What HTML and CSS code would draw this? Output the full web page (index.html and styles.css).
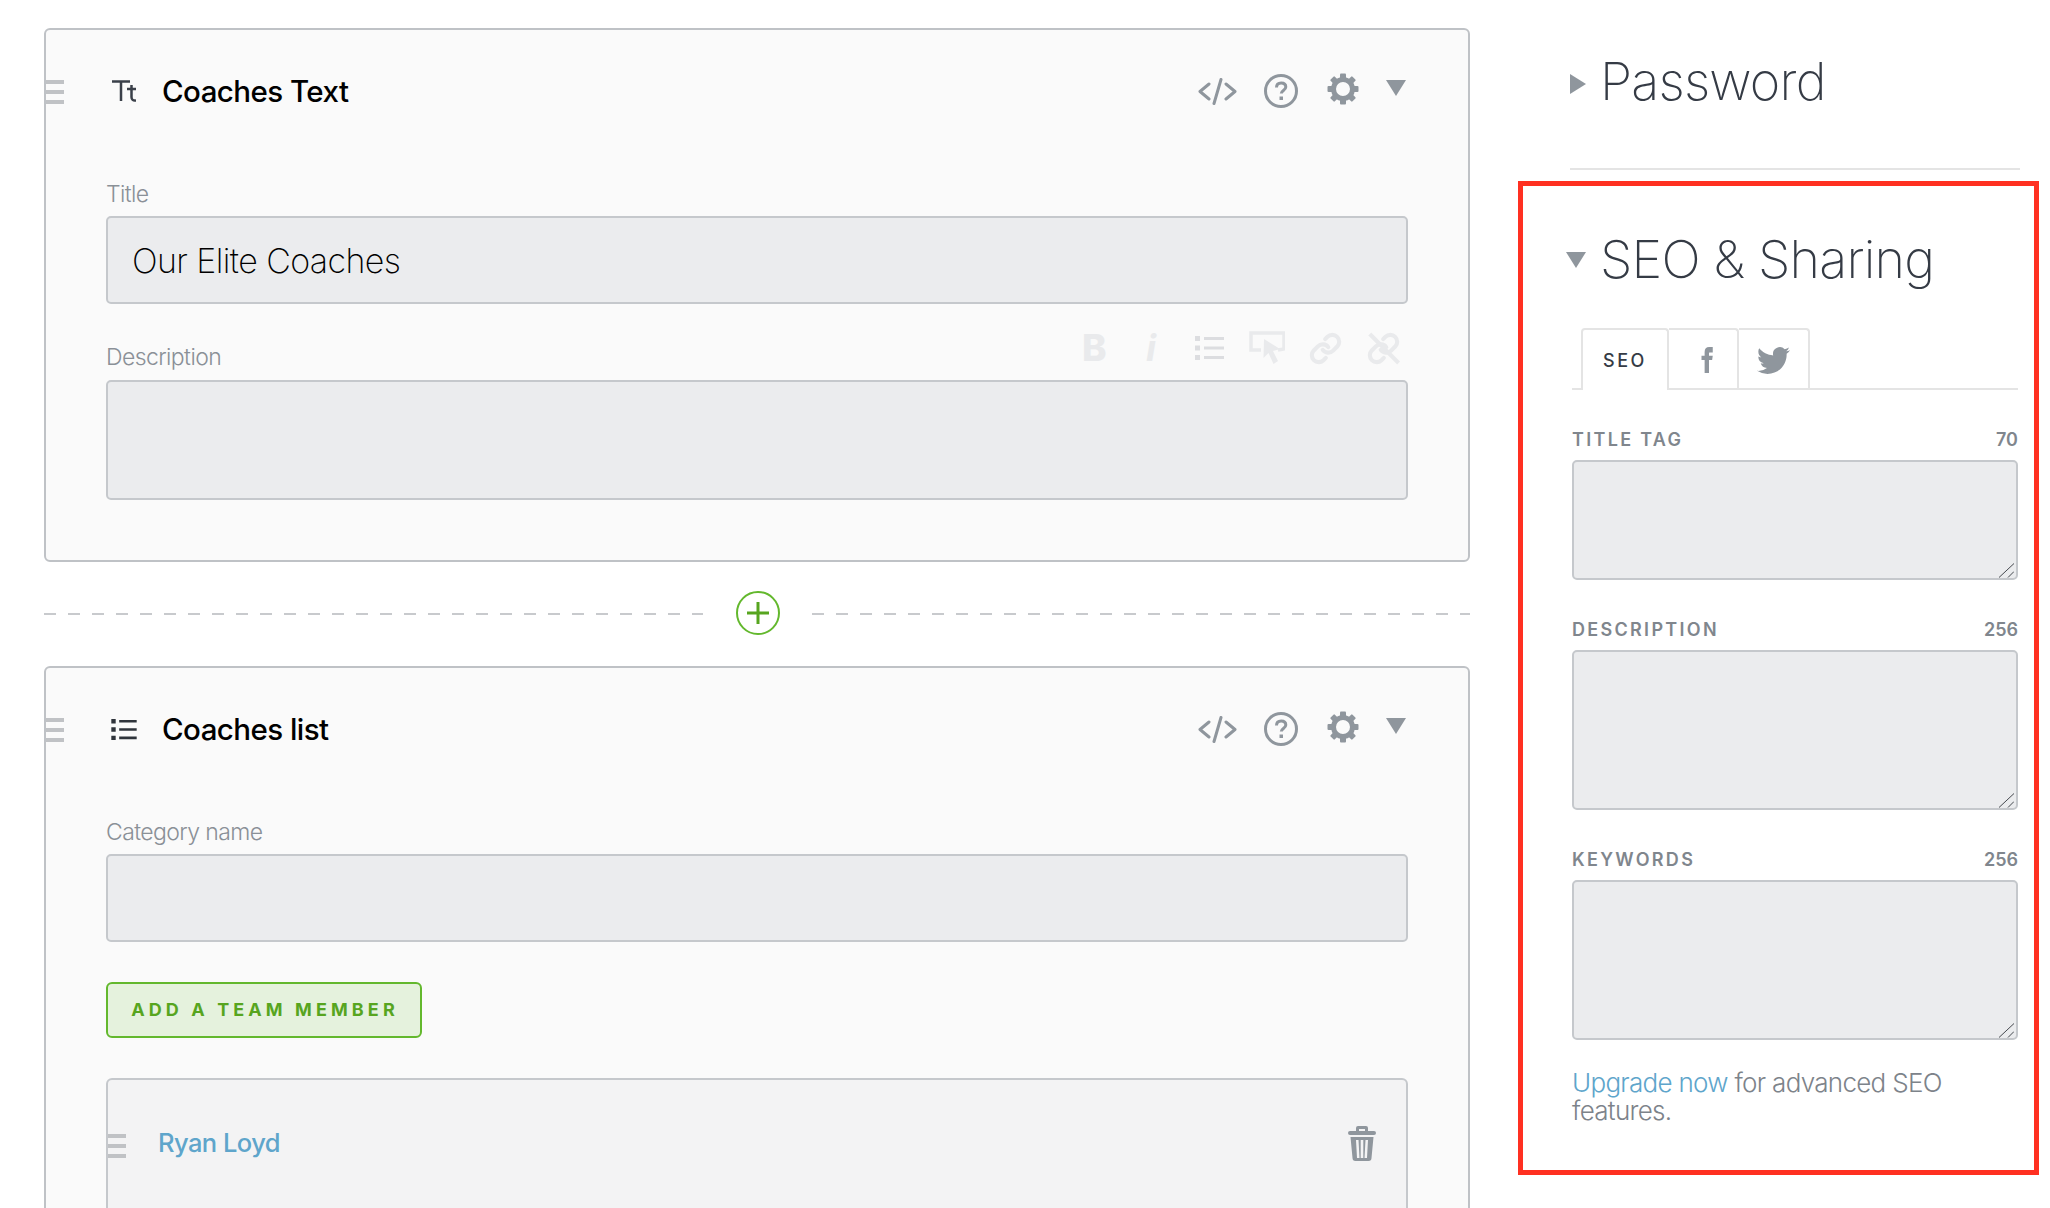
FILE: index.html
```html
<!DOCTYPE html>
<html lang="en">
<head>
<meta charset="utf-8">
<title>Coaches page editor</title>
<link rel="stylesheet" href="styles.css">
</head>
<body>
<svg class="defs" width="0" height="0" aria-hidden="true">
  <symbol id="i-code" viewBox="0 0 39 27"><path d="M11 6 2 13.500l9 7.500M28 6l9 7.500-9 7.500M23 1.500 16 25.500" fill="none" stroke="currentColor" stroke-width="3" stroke-linecap="round" stroke-linejoin="round"/></symbol>
  <symbol id="i-help" viewBox="0 0 34 34"><circle cx="17" cy="17" r="15.500" fill="none" stroke="currentColor" stroke-width="3"/><path d="M12.500 13.500c0-3 2-4.500 4.700-4.500s4.600 1.500 4.600 4c0 3.500-4.500 3.500-4.500 6.500" fill="none" stroke="currentColor" stroke-width="3"/><rect x="15.500" y="22.500" width="3.500" height="3.500" fill="currentColor"/></symbol>
  <symbol id="i-gear" viewBox="0 0 32 32"><circle cx="16" cy="16" r="9.500" fill="none" stroke="currentColor" stroke-width="5"/><g fill="currentColor"><rect x="13" y="0.500" width="6" height="6" rx="1"/><rect x="13" y="25.500" width="6" height="6" rx="1"/><rect x="0.500" y="13" width="6" height="6" rx="1"/><rect x="25.500" y="13" width="6" height="6" rx="1"/><rect x="13" y="0.500" width="6" height="6" rx="1" transform="rotate(45 16 16)"/><rect x="13" y="25.500" width="6" height="6" rx="1" transform="rotate(45 16 16)"/><rect x="0.500" y="13" width="6" height="6" rx="1" transform="rotate(45 16 16)"/><rect x="25.500" y="13" width="6" height="6" rx="1" transform="rotate(45 16 16)"/></g></symbol>
  <symbol id="i-down" viewBox="0 0 20 16"><path d="M0 0h20L10 16z" fill="currentColor"/></symbol>
  <symbol id="i-list" viewBox="0 0 29 24"><path d="M0 0h5v5H0zM9 1h20v3H9zM0 9.500h5v5H0zM9 10.500h20v3H9zM0 19h5v5H0zM9 20h20v3H9z" fill="currentColor"/></symbol>
  <symbol id="i-link" viewBox="0 0 24 24"><path d="M10 13a5 5 0 0 0 7.540.54l3-3a5 5 0 0 0-7.070-7.070l-1.720 1.710M14 11a5 5 0 0 0-7.540-.54l-3 3a5 5 0 0 0 7.070 7.070l1.710-1.710" fill="none" stroke="currentColor" stroke-width="3" stroke-linecap="round"/></symbol>
  <symbol id="i-unlink" viewBox="0 0 24 24"><use href="#i-link"/><path d="M2 1.500 23 22.500" fill="none" stroke="currentColor" stroke-width="3"/></symbol>
  <symbol id="i-cursor" viewBox="0 0 36 34"><path d="M12 19H2V2h33v16l-6 1" fill="none" stroke="currentColor" stroke-width="3.500"/><path d="M15 8l16 10-7 2 5 10-4.500 3-5-11-5 5z" fill="currentColor"/></symbol>
  <symbol id="i-grip" viewBox="0 0 15 15"><path d="M0 14.500 15 .5M9 14.500l6-6" fill="none" stroke="#45494f" stroke-width="1"/></symbol>
</svg>

<div class="page">
  <main class="main">
    <section class="card">
      <span class="handle"></span>
      <header class="card-head">
        <svg class="type-icon tt" viewBox="0 0 24 22" aria-hidden="true"><path d="M0 1.500h18M9 1.500V21M15 9h9M19.500 5v12c0 2.500 1.500 4 4.500 3.500" fill="none" stroke="#3a4049" stroke-width="2.500"/></svg>
        <h2 class="card-title">Coaches Text</h2>
        <div class="actions">
          <svg class="a-code"><use href="#i-code"/></svg>
          <svg class="a-help"><use href="#i-help"/></svg>
          <svg class="a-gear"><use href="#i-gear"/></svg>
          <svg class="a-down"><use href="#i-down"/></svg>
        </div>
      </header>
      <div class="field title-field">
        <label class="label">Title</label>
        <input class="input" type="text" value="Our Elite Coaches">
      </div>
      <div class="field desc-field">
        <div class="label-row">
          <label class="label">Description</label>
          <div class="toolbar">
            <span class="t-b">B</span>
            <span class="t-i">i</span>
            <svg class="t-list"><use href="#i-list"/></svg>
            <svg class="t-cursor"><use href="#i-cursor"/></svg>
            <svg class="t-link"><use href="#i-link"/></svg>
            <svg class="t-link"><use href="#i-unlink"/></svg>
          </div>
        </div>
        <div class="box"></div>
      </div>
    </section>

    <div class="divider">
      <span class="dash"></span>
      <svg class="add" viewBox="0 0 44 44" aria-hidden="true"><circle cx="22" cy="22" r="21" fill="#fff" stroke="#63b82d" stroke-width="2"/><path d="M11 22h22M22 11v22" stroke="#57a51f" stroke-width="3"/></svg>
      <span class="dash"></span>
    </div>

    <section class="card card-open">
      <span class="handle"></span>
      <header class="card-head">
        <svg class="type-icon ul"><use href="#i-list"/></svg>
        <h2 class="card-title">Coaches list</h2>
        <div class="actions">
          <svg class="a-code"><use href="#i-code"/></svg>
          <svg class="a-help"><use href="#i-help"/></svg>
          <svg class="a-gear"><use href="#i-gear"/></svg>
          <svg class="a-down"><use href="#i-down"/></svg>
        </div>
      </header>
      <div class="field cat-field">
        <label class="label">Category name</label>
        <input class="input" type="text">
      </div>
      <button class="add-btn" type="button">ADD A TEAM MEMBER</button>
      <div class="member">
        <span class="handle"></span>
        <a class="member-name">Ryan Loyd</a>
        <svg class="trash" viewBox="0 0 28 36" aria-hidden="true"><path d="M8 6V3a2 2 0 0 1 2-2h8a2 2 0 0 1 2 2v3h6a2 2 0 0 1 0 4H2a2 2 0 0 1 0-4zM11 4v2h6V4zM2.500 12h23L23.500 33a3 3 0 0 1-3 3h-13a3 3 0 0 1-3-3zM8 15l1 18h2.500L10.500 15zM12.700 15v18h2.600V15zM17.500 15l-1 18H19l1-18z" fill="#8f969d" fill-rule="evenodd"/></svg>
      </div>
    </section>
  </main>

  <aside class="side">
    <div class="side-sec">
      <svg class="tri-right" viewBox="0 0 16 20" aria-hidden="true"><path d="M0 0l16 10L0 20z" fill="#8f969d"/></svg>
      <h1 class="side-title">Password</h1>
    </div>
    <hr class="rule">
    <section class="seo">
      <div class="seo-head">
        <svg class="tri-down"><use href="#i-down"/></svg>
        <h1 class="side-title">SEO &amp; Sharing</h1>
      </div>
      <div class="tabs">
        <span class="tab tab-on">SEO</span>
        <span class="tab tab-fb">
          <svg viewBox="0 0 24 24" class="fb" preserveAspectRatio="none" aria-hidden="true"><path d="M9 8H4v4h5v12h7V12h5l1-4h-6V6.300C16 5.400 16.200 5 17.100 5H22V0h-5.800C11.600 0 9 1.600 9 4.600z" fill="#8f969d"/></svg>
        </span>
        <span class="tab tab-tw">
          <svg viewBox="0 0 24 24" class="tw" aria-hidden="true"><path d="M23.953 4.570a10 10 0 01-2.825.775 4.958 4.958 0 002.163-2.723c-.951.555-2.005.959-3.127 1.184a4.920 4.920 0 00-8.384 4.482C7.690 8.095 4.067 6.130 1.640 3.162a4.822 4.822 0 00-.666 2.475c0 1.710.870 3.213 2.188 4.096a4.904 4.904 0 01-2.228-.616v.060a4.923 4.923 0 003.946 4.827 4.996 4.996 0 01-2.212.085 4.936 4.936 0 004.604 3.417 9.867 9.867 0 01-6.102 2.105c-.390 0-.779-.023-1.170-.067a13.995 13.995 0 007.557 2.209c9.053 0 13.998-7.496 13.998-13.985 0-.210 0-.420-.015-.630A9.935 9.935 0 0024 4.590z" fill="#8f969d"/></svg>
        </span>
      </div>
      <div class="seo-field f-tag">
        <div class="seo-label"><span>TITLE TAG</span><span class="count">70</span></div>
        <div class="area-wrap">
          <textarea class="area area-s"></textarea>
          <svg class="grip"><use href="#i-grip"/></svg>
        </div>
      </div>
      <div class="seo-field f-desc">
        <div class="seo-label"><span>DESCRIPTION</span><span class="count">256</span></div>
        <div class="area-wrap">
          <textarea class="area area-l"></textarea>
          <svg class="grip"><use href="#i-grip"/></svg>
        </div>
      </div>
      <div class="seo-field f-key">
        <div class="seo-label"><span>KEYWORDS</span><span class="count">256</span></div>
        <div class="area-wrap">
          <textarea class="area area-l"></textarea>
          <svg class="grip"><use href="#i-grip"/></svg>
        </div>
      </div>
      <p class="upgrade"><a>Upgrade now</a> for advanced SEO features.</p>
    </section>
  </aside>
</div>
</body>
</html>
```

FILE: styles.css
```css
* { box-sizing: border-box; }
html, body { margin: 0; height: 100%; overflow: hidden; background: #fff; }
body { font-family: "Inter", "Liberation Sans", sans-serif; color: #000; }
.defs { position: absolute; }

.page { display: flex; align-items: flex-start; height: 1208px; overflow: hidden; }
.main { width: 1426px; margin-left: 44px; padding-top: 28px; flex: none; }
.side { width: 521px; margin-left: 48px; flex: none; }

.card { position: relative; height: 534px; background: #fafafa; border: 2px solid #bfc2c6; border-radius: 6px; padding: 0 60px; }
.card-open { height: 700px; }
.handle { position: absolute; left: 0; top: 50px; width: 18px; height: 24px; background: repeating-linear-gradient(#c0c2c5 0 4px, transparent 4px 10px); }
.card-head { display: flex; align-items: center; height: 122px; }
.type-icon { flex: none; }
.tt { width: 24px; height: 22px; margin-left: 6px; margin-right: 26px; }
.ul { width: 28px; height: 21px; margin-left: 4px; margin-right: 24px; color: #2f343b; }
.card-title { margin: 0; font-size: 29.500px; font-weight: 500; line-height: 36px; letter-spacing: -0.550px; color: #000; }
.actions { margin-left: auto; margin-right: 2px; display: flex; align-items: center; color: #8f969d; }
.a-code { width: 39px; height: 27px; margin-right: 27px; }
.a-help { width: 34px; height: 34px; margin-right: 30px; }
.a-gear { width: 32px; height: 32px; margin-right: 27px; margin-top: -5px; margin-left: -1px; }
.a-down { width: 20px; height: 16px; margin-top: -6px; }

.field { display: block; }
.title-field { margin-top: 28px; }
.desc-field { margin-top: 26px; }
.cat-field { margin-top: 28px; }
.label { display: block; font-size: 23px; font-weight: 300; line-height: 28px; letter-spacing: -0.600px; color: #8a9097; }
.input { display: block; width: 100%; height: 88px; margin-top: 8px; padding: 0 24px; background: #ebecee; border: 2px solid #c5c8cc; border-radius: 5px; font: 200 34px "Inter", sans-serif; letter-spacing: -0.600px; color: #000; outline: none; }
.box { height: 120px; background: #ebecee; border: 2px solid #c5c8cc; border-radius: 5px; }
.label-row { display: flex; justify-content: space-between; align-items: flex-end; height: 44px; margin-bottom: 6px; }
.label-row .label { margin-bottom: 3px; }
.toolbar { display: flex; align-items: center; color: #e9eaec; height: 36px; margin-bottom: 8px; }
.t-b { font: 800 37px/36px "Inter", sans-serif; width: 64px; }
.t-i { font: italic 700 37px/36px "Inter", sans-serif; width: 49px; }
.t-list { width: 29px; height: 24px; margin-right: 25px; color: #dcdde0; }
.t-cursor { width: 36px; height: 34px; margin-right: 24px; }
.t-link { width: 33px; height: 33px; margin-right: 25px; }
.t-link:last-child { margin-right: 8px; }

.divider { display: flex; align-items: center; height: 104px; }
.dash { flex: 1; height: 2px; background: repeating-linear-gradient(90deg, #c8cacd 0 12px, transparent 12px 24px); }
.add { width: 44px; height: 44px; margin: 0 32px 2px 33px; flex: none; }

.add-btn { display: block; width: 316px; height: 56px; margin-top: 40px; padding: 0 0 2px 2px; background: #e5f2dd; border: 2px solid #63b82d; border-radius: 6px; font: 700 18px "Inter", sans-serif; letter-spacing: 4.100px; color: #57a51f; }

.member { position: relative; display: flex; align-items: center; justify-content: space-between; margin-top: 40px; height: 170px; padding: 0 30px 42px 50px; background: #f3f3f4; border: 2px solid #c5c8cc; border-radius: 6px 6px 0 0; }
.member .handle { top: 54px; }
.member-name { font-size: 25.500px; font-weight: 500; letter-spacing: -0.550px; color: #5ea5cb; }
.trash { width: 28px; height: 36px; margin-top: 2px; }

.side-sec { display: flex; align-items: center; height: 168px; padding: 0 0 5px 52px; }
.tri-right { width: 16px; height: 20px; margin-right: 14px; margin-top: 5px; flex: none; }
.side-title { margin: 0; font-size: 52px; font-weight: 200; line-height: 64px; letter-spacing: -0.800px; color: #353b45; white-space: nowrap; }
.rule { height: 2px; margin: 0 19px 11px 52px; border: 0; background: #e4e4e4; }
.seo { height: 994px; border: 5px solid #ff3021; padding: 0 16px 0 49px; }
.seo-head { display: flex; align-items: center; height: 84px; margin-top: 32px; margin-left: -6px; }
.tri-down { width: 20px; height: 16px; margin-right: 14px; color: #8f969d; flex: none; }
.tabs { display: flex; height: 62px; margin-top: 26px; border-bottom: 2px solid #e4e4e4; padding-left: 9px; }
.tab { display: flex; align-items: center; justify-content: center; height: 62px; border: 2px solid #e4e4e4; border-bottom: 0; border-left: 0; border-radius: 0 4px 0 0; }
.tab-on { width: 88px; border-left: 2px solid #e4e4e4; border-radius: 4px 4px 0 0; background: #fff; font-size: 18px; font-weight: 500; letter-spacing: 2.500px; color: #353b45; }
.tab-fb { width: 70px; }
.tab-tw { width: 71px; }
.fb { width: 15px; height: 26px; margin-left: 7px; }
.tw { width: 33px; height: 33px; }

.seo-field { display: block; }
.f-tag { margin-top: 35px; }
.f-desc { margin-top: 35px; }
.f-key { margin-top: 35px; }
.seo-label { display: flex; justify-content: space-between; align-items: center; height: 28px; margin-bottom: 7px; font-size: 18px; font-weight: 600; letter-spacing: 2.300px; color: #80868d; }
.count { letter-spacing: 0; }
.area-wrap { position: relative; }
.area { display: block; width: 100%; margin: 0; background: #ebecee; border: 2px solid #c5c8cc; border-radius: 5px; resize: none; }
.area-s { height: 120px; }
.area-l { height: 160px; }
.grip { position: absolute; right: 4px; bottom: 2px; width: 15px; height: 15px; }
.upgrade { margin: 29px 0 0; font-size: 26px; font-weight: 300; line-height: 28px; letter-spacing: -0.700px; color: #7d838a; }
.upgrade a { color: #5ea5cb; }
```
